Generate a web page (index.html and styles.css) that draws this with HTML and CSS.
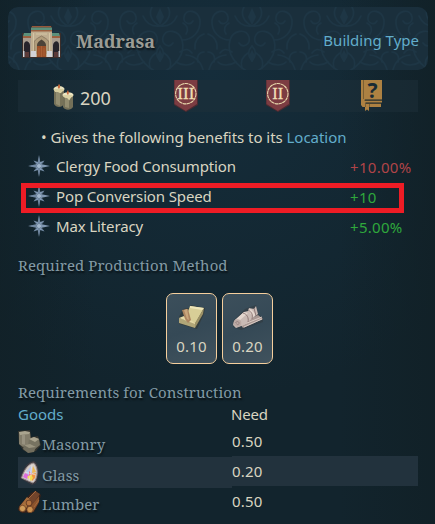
FILE: index.html
```
<!DOCTYPE html>
<html lang="en">
<head>
    <meta charset="UTF-8">
    <title>Madrasa</title>
    <meta name="viewport" content="width=device-width, initial-scale=1.0">
    <link rel="stylesheet" href="styles.css">
</head>
<body>
    <!-- shared icons -->
    <svg class="defs" width="0" height="0">
        <symbol id="star" viewBox="0 0 22 22">
            <path d="M11 0l1.300 7L16.500 5.500l-2.800 3.800L22 11l-8.300 1.700 2.800 3.800-4.200-1.500L11 22l-1.300-7-4.200 1.500 2.800-3.800L0 11l8.300-1.700L5.500 5.500 9.700 7z" fill="#7f97b1"/>
            <path d="M11 3v8L6.500 6.500M4 11h7l5-4.500M11 11v7M11 11l4.500 4.500M11 11l-4.500 4.500" stroke="#566b83" stroke-width=".7" fill="none"/>
            <circle cx="11" cy="11" r="2" fill="#a3b7cd"/>
        </symbol>
        <symbol id="badge" viewBox="0 0 24 32">
            <path d="M0 0h24v25L12 32 0 25z" fill="#4a2a30"/>
            <path d="M.5 0h22.500v24L11.800 31 .5 24z" fill="#7c3c42"/>
            <circle cx="11.800" cy="13.700" r="10.200" fill="none" stroke="#e8d8ac" stroke-width="1.100" stroke-dasharray="3.500 .4"/>
        </symbol>
    </svg>

    <div class="header">
        <svg class="damask" width="420" height="63">
            <defs>
                <pattern id="damask" width="92" height="72" patternUnits="userSpaceOnUse" x="14" y="-3">
                    <g id="scroll" fill="none" stroke="#28465a" stroke-width="1.600" stroke-linecap="round">
                        <path d="M46 70C30 62 20 50 24 36c3-10 16-12 19-3 2 7-6 12-10 6"/>
                        <path d="M24 36C14 36 5 28 6 16 8 6 20 4 22 13c1 6-6 9-9 4"/>
                        <path d="M46 22C38 18 34 10 38 3M46 22c-9 1-14-3-17-10M2 70c2-12 8-18 18-19M2 48c5 0 8 5 6 10M30 58c-6 4-14 4-18 0M2 30c6 2 10 8 9 15"/>
                        <path d="M26 48c-6-4-9-3-12 1M20 30c-3-5-1-9 3-11M36 64c-2-7 1-12 6-15M46 42c-4 4-5 9 0 15"/>
                    </g>
                    <use href="#scroll" transform="matrix(-1 0 0 1 92 0)"/>
                    <path d="M46 4l4 9-4 8-4-8zM46 46l3 6-3 6-3-6z" fill="#28465a"/>
                </pattern>
            </defs>
            <rect width="420" height="63" fill="url(#damask)"/>
        </svg>
        <svg class="building" width="39" height="33" viewBox="0 0 39 33">
            <path d="M0 8h9V1h21v7h9v25H0z" fill="#3a2d2a"/>
            <path d="M1 12h37v20H1z" fill="#a99c8e"/>
            <path d="M9 5h21v27H9z" fill="#bfad90"/>
            <path d="M10 1h19v1.500H10z" fill="#97573a"/>
            <path d="M9 2.500h21V5H9zM2 8h7v3H1zM30 8h7l1 3h-8z" fill="#5c907b"/>
            <path d="M9 5h21v1.500H9zM1 11h8v2H1zM30 11h8v2h-8z" fill="#9b6040"/>
            <path d="M12 29V18c0-3 4-5 7.500-7 3.500 2 7.500 4 7.500 7v11" fill="#b09c7b" stroke="#8b7961"/>
            <path d="M15 32V20c0-2 2-4 4.500-5.500C22 16 24 18 24 20v12z" fill="#4c4338"/>
            <path d="M15 21h9v11h-9z" fill="#9a5029"/>
            <path d="M19.500 21v11M17 23v8M22 23v8" stroke="#b56b3e" stroke-width=".6"/>
            <path d="M2 32V20c0-5 5-5 6 0v12zM31 32V20c1-5 6-5 6 0v12z" fill="#27232a"/>
            <path d="M3 27h4v5H3zM32 27h4v5h-4z" fill="#5b3937"/>
            <path d="M9 26h5v6H9zM25 26h5v6h-5zM1 26h1.500v6H1zM36.500 26H38v6h-1.500z" fill="#d2d2d6"/>
            <path d="M11.500 8v18M27.500 8v18M14 9h11" stroke="#dbcba9" stroke-width=".8"/>
        </svg>
        <h1>Madrasa</h1>
        <a class="type">Building Type</a>
    </div>

    <div class="stats">
        <div class="stat price">
            <svg width="22" height="26" viewBox="0 0 22 26">
                <path d="M1 5v15c2 4 8 4 10 0V5z" fill="#777259"/>
                <path d="M3 6v14l4 2V6z" fill="#938d70"/>
                <ellipse cx="6" cy="5" rx="5.500" ry="3" fill="#e8e1bd"/>
                <path d="M1 5c1 5 2 2 4 3s2 2 4 0l2-3z" fill="#d7cd9f"/>
                <path d="M10 11v12c2 3.500 8 3.500 10 0V11z" fill="#747058"/>
                <path d="M12 13v10l4 1V13z" fill="#938d70"/>
                <ellipse cx="15" cy="11" rx="5.500" ry="2.800" fill="#eee6c2"/>
                <path d="M10 11c1 4 2 2 4 3s2 4 3 1l3-4z" fill="#ddd3a5"/>
                <path d="M6 0c-2 3-1 4 0 5 1-1 2-3 0-5zM15 6c-2 3-1 4 0 5 1-1 1-3 0-5z" fill="#c96a3c"/>
            </svg>
            <span>200</span>
        </div>
        <div class="stat level">
            <svg width="24" height="32"><use href="#badge"/><text x="11.800" y="19" textLength="17" lengthAdjust="spacingAndGlyphs">III</text></svg>
        </div>
        <div class="stat level">
            <svg width="24" height="32"><use href="#badge"/><text x="11.800" y="19" textLength="11" lengthAdjust="spacingAndGlyphs">II</text></svg>
        </div>
        <div class="stat book">
            <svg width="21" height="32" viewBox="0 0 21 32">
                <path d="M0 0h21v19.500H4V21h17v1.500H4.500v1.500H20v3H8v4l-2-1.500L4 31v-4H1.500L0 25z" fill="#ad8142"/>
                <path d="M2.500 0v19M3 20.200h18M5 23.200h15M4.500 24v3M8.500 24v3" stroke="#6e572f" stroke-width=".8" fill="none"/>
                <text x="11.500" y="17.500">?</text>
            </svg>
        </div>
    </div>

    <div class="effects">
        <p class="intro">• Gives the following benefits to its <a>Location</a></p>
        <div class="effect">
            <svg width="22" height="22"><use href="#star"/></svg>
            <span class="name">Clergy Food Consumption</span>
            <span class="value bad">+10.00%</span>
        </div>
        <div class="effect marked">
            <svg width="22" height="22"><use href="#star"/></svg>
            <span class="name">Pop Conversion Speed</span>
            <span class="value good">+10</span>
        </div>
        <div class="effect">
            <svg width="22" height="22"><use href="#star"/></svg>
            <span class="name">Max Literacy</span>
            <span class="value good">+5.00%</span>
        </div>
    </div>

    <h2 class="production-title">Required Production Method</h2>
    <div class="production">
        <div class="card">
            <svg width="28" height="28" viewBox="0 0 28 28">
                <path d="M1 13l4-8 6-1 2-3 14 3-1 6-7 15-18-5z" fill="#30332e" opacity=".55"/>
                <path d="M12 2l14 2-9 16-10-5z" fill="#d8ce97"/>
                <path d="M12 2l14 2-2 2-12-2z" fill="#eee5b8"/>
                <path d="M26 4l-1 6-8 14v-5z" fill="#9c9166"/>
                <path d="M1 14l16 5v5L1 19z" fill="#b1a678"/>
                <path d="M1 14l5-2 11 7v1z" fill="#e5d9a6"/>
                <path d="M4 6l6-1 3 11-3 3-3-4z" fill="#ac8560"/>
                <path d="M6 6l3 9 2 1-2-11z" fill="#c9a67c"/>
            </svg>
            <span>0.10</span>
        </div>
        <div class="card">
            <svg width="32" height="28" viewBox="0 0 32 28">
                <path d="M1 17L13 5l11-4 2 9 5 4v4L9 26l-8-3z" fill="#30353a" opacity=".5"/>
                <path d="M8 20l18-9 5 4-20 9z" fill="#a89792"/>
                <path d="M10 21l20-8M12 23l18-8" stroke="#dacbc4" fill="none"/>
                <path d="M2 17l10-9 4-1 1-3 5 1 2-3 2 8-14 11-8 3-3-3z" fill="#c9bab4"/>
                <path d="M3 16l9-8 4 1-9 8zM16 6l3-1 5 6-3 2z" fill="#e3d6ce"/>
                <path d="M11 9c4 1 6 5 5 9M16 6c4 2 5 5 4 9M22 4l2 8" stroke="#8d7775" stroke-width="1" fill="none"/>
                <ellipse cx="5.500" cy="19" rx="3.800" ry="3.800" fill="#bcaaa4"/>
                <path d="M3.500 19c1-2.500 4-1.500 3.500.5s-2.500 1-2.500 0" stroke="#8d7775" stroke-width=".7" fill="none"/>
            </svg>
            <span>0.20</span>
        </div>
    </div>

    <h2>Requirements for Construction</h2>
    <div class="requirements">
        <div class="goods">
            <a class="head">Goods</a>
            <div class="row">
                <svg width="24" height="24" viewBox="0 0 24 24">
                    <path d="M0 1l12-1 1 7 7-1 3 9-5 6-7 2-6-3-4-6z" fill="#35352f"/>
                    <path d="M1 2h11l1 12-8 3-4-3z" fill="#837d6b"/>
                    <path d="M1 2l6-1 5 1-1 2-9 1z" fill="#aaa48f"/>
                    <path d="M4 5h3v10l-3-1z" fill="#989280"/>
                    <path d="M11 9l5-2 5 2 1 6-5 4-7-3z" fill="#777361"/>
                    <path d="M11 9l5-2 5 2-4 3z" fill="#aaa48e"/>
                    <path d="M6 15l6-1 6 3-2 5-6 1-5-4z" fill="#716d5d"/>
                    <path d="M6 15l6-1 6 3-7 1z" fill="#9a947f"/>
                </svg>
                <span>Masonry</span>
            </div>
            <div class="row odd">
                <svg width="24" height="24" viewBox="0 0 24 24">
                    <path d="M2 17C5 8 9 1 16 0c5 3 6 12 2 22l-4 2z" fill="#3e3a40"/>
                    <path d="M3.500 17C6 9 10 3 15.500 2c4 3 5 11 1.500 18l-2 2z" fill="#d5ccc6" stroke="#948b8b"/>
                    <path d="M8 11l5-6 1 7-4 2z" fill="#b9c6ee"/>
                    <path d="M15 5l3 6-4 1z" fill="#efb750"/>
                    <path d="M7 12l4 2-2 4-4-2z" fill="#dc6cdd"/>
                    <path d="M14 13l4-1-1 5-3 3z" fill="#f39440"/>
                    <path d="M9 16l4-3 2 4-2 3z" fill="#f5dc50"/>
                    <path d="M11 10l3 3-3 2z" fill="#ec6378"/>
                    <path d="M14 4l-3 16M7 11l11 3" stroke="#eee7ec" stroke-width=".6"/>
                </svg>
                <span>Glass</span>
            </div>
            <div class="row">
                <svg width="24" height="24" viewBox="0 0 24 24">
                    <path d="M1 16L13 3l5-2 5 4-3 10-4 7-12 1-4-3z" fill="#38221a"/>
                    <path d="M8 11L17 1l5 3-8 11z" fill="#71442b"/>
                    <path d="M2 16L9 7l4 4-6 9z" fill="#a8713b"/>
                    <path d="M12 17l9-11v6l-6 10z" fill="#8b532c"/>
                    <path d="M10 9l8-8M4 15l6-7M16 17l5-7" stroke="#a4683d"/>
                    <circle cx="11" cy="13" r="2.900" fill="#b5753f" stroke="#5a321f" stroke-width=".8"/>
                    <circle cx="4.500" cy="18.500" r="3.200" fill="#cf9c59" stroke="#6c3e22" stroke-width=".8"/>
                    <circle cx="12" cy="19.500" r="3.200" fill="#cb924f" stroke="#6c3e22" stroke-width=".8"/>
                </svg>
                <span>Lumber</span>
            </div>
        </div>
        <div class="need">
            <span class="head">Need</span>
            <div class="row">0.50</div>
            <div class="row odd">0.20</div>
            <div class="row">0.50</div>
        </div>
    </div>
</body>
</html>
```
FILE: styles.css
```
*, *::after {
    box-sizing: border-box;
}

body {
    margin: 0;
    padding: 7px 7px 0 8px;
    height: 524px;
    overflow: hidden;
    font-family: "Noto Sans", sans-serif;
    font-size: 15px;
    line-height: 20px;
    color: #d9d5c1;
    background:
        linear-gradient(90deg, rgba(17, 32, 38, 0.65), transparent 22%, transparent 78%, rgba(17, 32, 38, 0.8)),
        radial-gradient(ellipse 330px 330px at 210px 70px, #152d3b, #12242d);
}

.defs {
    display: block;
}

h1, h2 {
    margin: 0;
    font-family: "Noto Serif", "DejaVu Serif Condensed", "DejaVu Serif", serif;
    text-shadow: 1px 2px 2px rgba(0, 0, 0, 0.6);
}

h1 {
    font-size: 18px;
    line-height: 24px;
    color: #9b9c95;
}

h2 {
    margin-left: 10px;
    font-size: 15px;
    line-height: 20px;
    font-weight: normal;
    letter-spacing: 0.08px;
    color: #829aa5;
}

a {
    color: #62adcb;
}

/* title bar */
.header {
    position: relative;
    display: flex;
    align-items: center;
    height: 63px;
    padding: 5px 9px 0 14px;
    border-radius: 10px;
    overflow: hidden;
    background: #1b303d;
}

.damask {
    position: absolute;
    left: 0;
    top: 0;
    opacity: 0.3;
}

.building {
    position: relative;
    margin-top: 1px;
}

.header h1 {
    position: relative;
    margin-left: 15px;
}

.type {
    position: relative;
    margin: -2px 0 0 auto;
}

/* price, levels, book */
.stats {
    display: flex;
    width: 400px;
    height: 32px;
    margin: 10px 0 0 10px;
    background: rgba(30, 48, 58, 0.5);
}

.stat {
    width: 93px;
    display: flex;
    justify-content: center;
}

.price {
    width: 121px;
    justify-content: flex-start;
    padding: 4px 0 0 35px;
    gap: 5px;
    font-size: 18px;
    line-height: 29px;
}

.level + .level {
    padding-right: 1px;
}

.level text {
    font-family: "Liberation Serif", serif;
    font-size: 17px;
    text-anchor: middle;
    fill: #f0dfb4;
    stroke: #f0dfb4;
    stroke-width: 0.3px;
}

.book svg {
    overflow: visible;
}

.book text {
    font-family: "Noto Sans", sans-serif;
    font-size: 21px;
    font-weight: bold;
    text-anchor: middle;
    fill: #192b34;
}

/* benefits */
.effects {
    margin-top: 15px;
}

.intro {
    margin: 0 0 4px 33px;
    letter-spacing: -0.04px;
}

.effect {
    position: relative;
    display: flex;
    align-items: center;
    height: 30px;
    padding-left: 20px;
}

.effect .name {
    width: 294px;
    margin-left: 6px;
    letter-spacing: -0.13px;
}

.value {
    padding-top: 2px;
    letter-spacing: 0.3px;
}

.good {
    color: #2fa83c;
}

.bad {
    color: #b04448;
}

.marked::after {
    content: "";
    position: absolute;
    left: 13px;
    top: 2px;
    width: 383px;
    height: 30px;
    border: 5px solid #ee1c25;
}

/* production method */
.production-title {
    margin-top: 14px;
}

.production {
    display: flex;
    gap: 5px;
    margin: 18px 0 18px 158px;
}

.card {
    display: flex;
    flex-direction: column;
    align-items: center;
    width: 51px;
    height: 71px;
    padding-top: 10px;
    border: 1px solid #f5cf9d;
    border-radius: 7px;
    background: linear-gradient(160deg, #3c4f5b, #354956 50%, #40525d);
}

.card span {
    margin-top: 4px;
    letter-spacing: 0.2px;
}

/* goods table */
.requirements {
    display: flex;
    width: 400px;
    margin: 2px 0 0 10px;
}

.goods {
    width: 214px;
}

.need {
    width: 186px;
}

.head {
    display: block;
    height: 22px;
}

.need .head {
    margin-left: -1px;
    letter-spacing: -0.2px;
}

.row {
    height: 30px;
    line-height: 31px;
    letter-spacing: 0.2px;
}

.goods .row {
    display: flex;
    height: 31px;
    font-family: "Noto Serif", "DejaVu Serif Condensed", "DejaVu Serif", serif;
    letter-spacing: 0;
    color: #829aa5;
}

.goods .row svg {
    margin-top: 4px;
}

.goods .row span {
    line-height: 37px;
    text-shadow: 1px 2px 2px rgba(0, 0, 0, 0.6);
}

.goods .row:last-child svg {
    margin-top: 2px;
}

.goods .row:last-child span {
    line-height: 33px;
}

.odd {
    background: #22323d;
}
```
